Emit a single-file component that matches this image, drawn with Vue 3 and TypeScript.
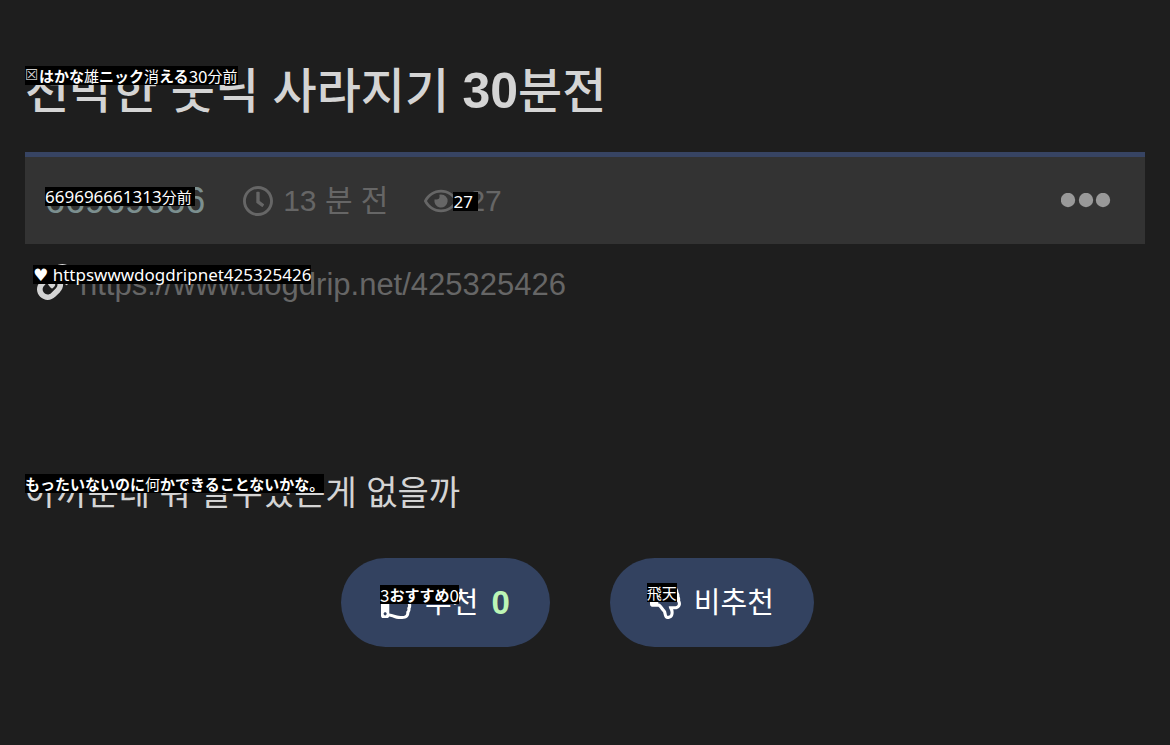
<script setup lang="ts">
import { ref } from 'vue'

interface Run {
  text: string
  kind: 'kana' | 'kanji' | 'latin' | 'thin' | 'box'
}

const captions: Record<string, Run[]> = {
  title: [
    { text: '☒', kind: 'box' },
    { text: 'はかな', kind: 'kana' },
    { text: '雄', kind: 'kanji' },
    { text: 'ニック', kind: 'kana' },
    { text: '消', kind: 'kanji' },
    { text: 'える', kind: 'kana' },
    { text: '30', kind: 'thin' },
    { text: '分前', kind: 'kanji' },
  ],
  author: [
    { text: '669696661313', kind: 'latin' },
    { text: '分前', kind: 'kanji' },
  ],
  views: [{ text: '27', kind: 'latin' }],
  link: [{ text: '♥ httpswwwdogdripnet425325426', kind: 'latin' }],
  body: [
    { text: 'もったいないのに', kind: 'kana' },
    { text: '何', kind: 'kanji' },
    { text: 'かできることないかな。', kind: 'kana' },
  ],
  up: [
    { text: '3', kind: 'thin' },
    { text: 'おすすめ', kind: 'kana' },
    { text: '0', kind: 'thin' },
  ],
  down: [{ text: '飛天', kind: 'kanji' }],
}

const votes = ref(0)

const thumb =
  'M466.27 286.69C475.04 271.84 480 256 480 236.85c0-44.015-37.218-85.58-85.82-85.58H357.7c4.92-12.81 8.85-28.13 8.85-46.54C366.55 31.936 328.86 0 271.28 0c-61.607 0-58.093 94.933-71.76 108.6-22.747 22.747-49.615 66.447-68.76 83.4H32c-17.673 0-32 14.327-32 32v240c0 17.673 14.327 32 32 32h64c14.893 0 27.408-10.174 30.978-23.95 44.509 1.001 75.06 39.94 177.802 39.94 7.22 0 15.22.01 22.22.01 77.117 0 111.986-39.423 112.94-95.33 13.319-18.425 20.299-43.122 17.34-66.99 9.854-18.452 13.664-40.343 8.99-62.99zm-61.75 53.83c12.56 21.13 1.26 49.41-13.94 57.57 7.7 48.78-17.608 65.9-53.12 65.9h-37.82c-71.639 0-118.029-37.82-171.64-37.82V240h10.92c28.36 0 67.98-70.89 94.54-97.46 28.36-28.36 18.91-75.63 37.82-94.54 47.27 0 47.27 32.98 47.27 56.73 0 39.17-28.36 56.72-28.36 94.54h103.99c21.11 0 37.73 18.91 37.82 37.82.09 18.9-12.82 37.81-22.27 37.81 13.489 14.555 16.371 45.236-5.21 65.62zM88 432c0 13.255-10.745 24-24 24s-24-10.745-24-24 10.745-24 24-24 24 10.745 24 24z'
</script>

<template>
  <main class="page">
    <h1 class="title">
      천박한 붓닉 사라지기 <span class="number">30</span>분전
      <span class="caption caption-title"><span v-for="(r, i) in captions.title" :key="i" :class="r.kind">{{ r.text }}</span></span>
    </h1>

    <header class="meta">
      <a class="author" href="#author">66969666
        <span class="caption caption-author"><span v-for="(r, i) in captions.author" :key="i" :class="r.kind">{{ r.text }}</span></span>
      </a>
      <span class="stat">
        <svg class="clock" viewBox="8 8 496 496" aria-hidden="true"><path d="M256 8C119 8 8 119 8 256s111 248 248 248 248-111 248-248S393 8 256 8zm0 448c-110.500 0-200-89.500-200-200S145.500 56 256 56s200 89.500 200 200-89.500 200-200 200zm61.800-104.400l-84.900-61.700c-3.100-2.300-4.900-5.900-4.900-9.700V116c0-6.600 5.400-12 12-12h32c6.600 0 12 5.400 12 12v141.700l66.800 48.600c5.400 3.900 6.500 11.400 2.600 16.800L334.600 349c-3.900 5.300-11.400 6.500-16.800 2.600z" /></svg>
        13 분 전
      </span>
      <span class="stat views">
        <svg class="eye" viewBox="0 64 576 384" aria-hidden="true"><path d="M288 144a110.940 110.940 0 0 0-31.240 5 55.400 55.400 0 0 1 7.240 27 56 56 0 0 1-56 56 55.400 55.400 0 0 1-27-7.240A111.710 111.710 0 1 0 288 144zm284.520 97.400C518.290 135.590 410.930 64 288 64S57.680 135.640 3.480 241.410a32.350 32.350 0 0 0 0 29.190C57.710 376.410 165.070 448 288 448s230.320-71.640 284.520-177.410a32.350 32.350 0 0 0 0-29.190zM288 400c-98.650 0-189.090-55-237.930-144C98.910 167 189.340 112 288 112s189.090 55 237.930 144C477.100 345 386.660 400 288 400z" /></svg>
        27
        <span class="caption caption-views"><span v-for="(r, i) in captions.views" :key="i" :class="r.kind">{{ r.text }}</span></span>
      </span>
      <button class="more" type="button" aria-label="더보기">
        <svg viewBox="0 0 50 16" aria-hidden="true"><circle cx="7" cy="7" r="7.200" /><circle cx="25" cy="7" r="7.200" /><circle cx="42" cy="7" r="7.200" /></svg>
      </button>
    </header>

    <p class="source">
      <svg class="chain" viewBox="0 0 512 512" aria-hidden="true"><path d="M326.612 185.391c59.747 59.809 58.927 155.698.36 214.590-.11.120-.24.250-.36.370l-67.200 67.200c-59.270 59.270-155.699 59.262-214.960 0-59.270-59.260-59.270-155.700 0-214.960l37.106-37.106c9.840-9.840 26.786-3.300 27.294 10.606.648 17.722 3.826 35.527 9.690 52.721 1.986 5.822.567 12.262-3.783 16.612l-13.087 13.087c-28.026 28.026-28.905 73.660-1.155 101.960 28.024 28.579 74.086 28.749 102.325.510l67.200-67.190c28.191-28.191 28.073-73.757 0-101.830-3.701-3.694-7.429-6.564-10.341-8.569a16.037 16.037 0 0 1-6.947-12.606c-.396-10.567 3.348-21.456 11.698-29.806l21.054-21.055c5.521-5.521 14.182-6.199 20.584-1.731a152.482 152.482 0 0 1 20.522 17.197zM467.547 44.449c-59.261-59.262-155.690-59.270-214.960 0l-67.200 67.200c-.12.120-.25.250-.36.370-58.566 58.892-59.387 154.781.360 214.590a152.454 152.454 0 0 0 20.521 17.196c6.402 4.468 15.064 3.789 20.584-1.731l21.054-21.055c8.350-8.350 12.094-19.239 11.698-29.806a16.037 16.037 0 0 0-6.947-12.606c-2.912-2.005-6.640-4.875-10.341-8.569-28.073-28.073-28.191-73.639 0-101.830l67.200-67.190c28.239-28.239 74.300-28.069 102.325.510 27.750 28.300 26.872 73.934-1.155 101.960l-13.087 13.087c-4.350 4.350-5.769 10.790-3.783 16.612 5.864 17.194 9.042 34.999 9.690 52.721.509 13.906 17.454 20.446 27.294 10.606l37.106-37.106c59.271-59.259 59.271-155.699.001-214.959z" /></svg>
      <a href="https://www.dogdrip.net/425325426">https://www.dogdrip.net/425325426</a>
      <span class="caption caption-link"><span v-for="(r, i) in captions.link" :key="i" :class="r.kind">{{ r.text }}</span></span>
    </p>

    <p class="body">
      아까운데 뭐 할수있는게 없을까
      <span class="caption caption-body"><span v-for="(r, i) in captions.body" :key="i" :class="r.kind">{{ r.text }}</span></span>
    </p>

    <div class="votes">
      <button class="vote" type="button" @click="votes++">
        <svg class="thumb" viewBox="0 0 480 512" aria-hidden="true"><path :d="thumb" /></svg>
        <span>추천</span>
        <strong class="count">{{ votes }}</strong>
        <span class="caption caption-up"><span v-for="(r, i) in captions.up" :key="i" :class="r.kind">{{ r.text }}</span></span>
      </button>
      <button class="vote" type="button">
        <svg class="thumb" viewBox="0 0 480 512" aria-hidden="true"><path transform="matrix(1 0 0 -1 0 512)" :d="thumb" /></svg>
        <span>비추천</span>
        <span class="caption caption-down"><span v-for="(r, i) in captions.down" :key="i" :class="r.kind">{{ r.text }}</span></span>
      </button>
    </div>
  </main>
</template>

<style>
html,
body {
  background: #1e1e1e;
}
</style>

<style scoped>
.page {
  padding: 62px 25px;
  font-family: "Liberation Sans", "Noto Sans CJK KR", sans-serif;
  color: #d4d4d4;
}
svg {
  flex: none;
  fill: currentColor;
}
.title,
.body,
.source,
.author,
.views,
.vote {
  position: relative;
}
.title {
  margin: 0;
  font-size: 48px;
  line-height: 60px;
  font-weight: 500;
}
.number {
  font-size: 50px;
  line-height: 1;
  font-weight: 700;
}
.meta {
  display: flex;
  align-items: center;
  height: 87px;
  margin-top: 30px;
  padding: 0 34px 0 20px;
  border-top: 5px solid #374463;
  background: #333;
  color: #666;
}
.author {
  margin-right: 38px;
  font-size: 36px;
  line-height: 42px;
  color: #7c8f8f;
  text-decoration: none;
}
.stat {
  display: flex;
  align-items: center;
  gap: 10px;
  margin-right: 36px;
  font-size: 30px;
  line-height: 42px;
}
.clock {
  width: 30px;
  height: 30px;
}
.eye {
  width: 34px;
  height: 24px;
}
.more {
  margin-left: auto;
  padding: 0;
  border: 0;
  background: none;
  color: #999;
}
.more svg {
  display: block;
  width: 50px;
  height: 16px;
}
.source {
  display: flex;
  align-items: flex-start;
  gap: 7px;
  margin: 20px 0 0;
  padding-left: 12px;
  font-size: 31px;
  line-height: 42px;
}
.source a {
  color: #666;
  text-decoration: none;
}
.chain {
  width: 36px;
  height: 36px;
}
.body {
  margin: 167px 0 0;
  font-size: 34px;
  line-height: 40px;
}
.votes {
  display: flex;
  justify-content: center;
  gap: 60px;
  margin-top: 45px;
  padding-right: 15px;
}
.vote {
  display: flex;
  align-items: center;
  gap: 13px;
  height: 89px;
  padding: 0 40px;
  border: 0;
  border-radius: 45px;
  background: #334260;
  color: #fff;
  font-family: inherit;
  font-size: 29px;
  line-height: 40px;
}
.thumb {
  width: 31px;
  height: 33px;
}
.count {
  font-size: 33px;
  color: #bdf5b5;
}
.caption {
  position: absolute;
  display: flex;
  height: 19px;
  background: #000;
  color: #fff;
  font-size: 15px;
  line-height: 19px;
  font-weight: 400;
  white-space: nowrap;
}
.kana {
  font-family: "Noto Sans CJK JP", sans-serif;
  font-weight: 700;
}
.kanji {
  font-family: "Noto Sans CJK JP", sans-serif;
}
.thin {
  font-family: "Noto Sans CJK JP", sans-serif;
  font-size: 17px;
}
.box {
  width: 14px;
  font-family: "DejaVu Sans", sans-serif;
  color: #ccc;
}
.latin {
  font-family: "Noto Sans", "DejaVu Sans", sans-serif;
  font-size: 17px;
  white-space: pre;
}
.caption-title {
  top: 4px;
  left: 0;
}
.caption-author {
  top: 7px;
  left: 0;
  padding-right: 3px;
}
.caption-views {
  top: 12px;
  left: 29px;
  width: 25px;
}
.caption-link {
  top: 1px;
  left: 8px;
}
.caption-body {
  top: 1px;
  left: 0;
}
.caption-up {
  top: 27px;
  left: 39px;
}
.caption-down {
  top: 25px;
  left: 37px;
}
</style>
